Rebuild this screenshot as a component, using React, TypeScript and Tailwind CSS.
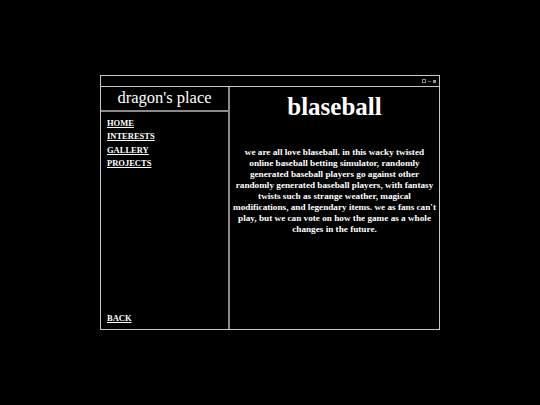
export default function App() {
  const serif = { fontFamily: '"Liberation Serif", "DejaVu Serif", serif' };
  const lines = [
    "we are all love blaseball. in this wacky twisted",
    "online baseball betting simulator, randomly",
    "generated baseball players go against other",
    "randomly generated baseball players, with fantasy",
    "twists such as strange weather, magical",
    "modifications, and legendary items. we as fans can't",
    "play, but we can vote on how the game as a whole",
    "changes in the future.",
  ];
  return (
    <div className="flex h-[405px] w-full items-center justify-center bg-black text-white" style={serif}>
      <div className="flex h-[255px] w-[340px] flex-col border border-[#c8c8c8]">
        <div className="flex h-[11px] shrink-0 items-center justify-end gap-[2px] border-b border-[#c8c8c8] pr-[3px]">
          <span className="block h-[4px] w-[4px] border border-[#888]" />
          <span className="block h-[1px] w-[3px] bg-[#666]" />
          <span className="block h-[3px] w-[3px] bg-[#999]" />
        </div>
        <div className="flex flex-1">
          <div className="flex w-[129px] shrink-0 flex-col border-r-2 border-[#8a8a8a]">
            <div className="flex h-[25px] items-center justify-center border-b-2 border-[#8a8a8a] text-[16.5px] leading-none">
              dragon's place
            </div>
            <nav className="flex flex-col pl-[6px] pt-[5px] text-[8.5px] font-bold leading-[13.3px]">
              <a className="underline">HOME</a>
              <a className="underline">INTERESTS</a>
              <a className="underline">GALLERY</a>
              <a className="underline">PROJECTS</a>
            </nav>
            <div className="mt-auto pb-[4px] pl-[6px] text-[8.5px] font-bold leading-[13px]">
              <a className="underline">BACK</a>
            </div>
          </div>
          <div className="flex flex-1 flex-col items-center">
            <h1 className="mt-[5px] text-[25px] font-bold leading-[30px]">blaseball</h1>
            <p className="mt-[25px] text-center text-[9.2px] font-bold leading-[11px] whitespace-nowrap">
              {lines.map((l, i) => (
                <span key={i} className="block">{l}</span>
              ))}
            </p>
          </div>
        </div>
      </div>
    </div>
  );
}
